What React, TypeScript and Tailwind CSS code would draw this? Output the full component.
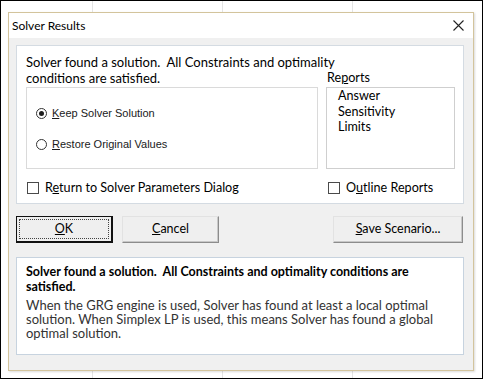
import React from "react";

const ui = "font-['Segoe_UI','Lato',sans-serif]";

function Radio({ checked, children }: { checked?: boolean; children: React.ReactNode }) {
  return (
    <div className="flex items-center h-[16px]">
      <div className="w-[11px] h-[11px] rounded-full border border-[#333] bg-white flex items-center justify-center">
        {checked && <div className="w-[5px] h-[5px] rounded-full bg-[#1e1e1e]" />}
      </div>
      <span className="ml-[5px] text-[11px] font-['Liberation_Sans',sans-serif] text-[#1a1a1a]">{children}</span>
    </div>
  );
}

function Check({ children }: { children: React.ReactNode }) {
  return (
    <div className="flex items-center h-[16px]">
      <div className="w-[12px] h-[12px] border border-[#4a4a4a] bg-white" />
      <span className="ml-[6px] text-[12.6px]">{children}</span>
    </div>
  );
}

function Btn({ children, width }: { children: React.ReactNode; width: string }) {
  return (
    <button
      className={`${width} h-[27px] bg-[#efefef] border border-t-[#e2e2e2] border-l-[#e2e2e2] border-r-[#8c8c8c] border-b-[#8c8c8c] shadow-[inset_-1px_-1px_0_#c8c8c8] flex items-center justify-center text-[12.5px] text-black`}
    >
      {children}
    </button>
  );
}

export default function App() {
  return (
    <div
      className={`w-[483px] h-[379px] border border-black bg-white bg-[repeating-linear-gradient(to_right,transparent_0px,transparent_91px,#e4e4e4_91px,#e4e4e4_92px,transparent_92px,transparent_130px)] overflow-hidden ${ui}`}
    >
      <div className="ml-[7px] mt-[11px] w-[466px] h-[359px] border border-[#d3c49c] bg-[#f0f0f0] flex flex-col shadow-[1px_1px_2px_rgba(0,0,0,0.15)]">
        {/* title bar */}
        <div className="h-[25px] bg-white flex items-center justify-between pl-[3px] pr-[9px]">
          <span className="text-[12px] text-black">Solver Results</span>
          <svg width="11" height="11" viewBox="0 0 11 11" className="block">
            <path d="M0.5 0.5 L10.5 10.5 M10.5 0.5 L0.5 10.5" stroke="#222" strokeWidth="1.1" fill="none" />
          </svg>
        </div>

        <div className="px-[7px] pt-[7px] flex flex-col">
          {/* top panel */}
          <div className="w-[448px] h-[159px] bg-white border border-[#d4dbe2] pl-[9px] pt-[8px] text-[13px] leading-[16px] text-black">
            <div className="whitespace-pre">Solver found a solution.  All Constraints and optimality</div>
            <div className="flex">
              <span className="w-[301px]">conditions are satisfied.</span>
              <span className="text-[12.6px]">
                Re<u>p</u>orts
              </span>
            </div>
            <div className="flex mt-px">
              <div className="w-[292px] h-[82px] border border-[#dadada] pl-[9px] pt-[17px]">
                <Radio checked>
                  <u>K</u>eep Solver Solution
                </Radio>
                <div className="mt-[15px]">
                  <Radio>
                    <u>R</u>estore Original Values
                  </Radio>
                </div>
              </div>
              <div className="ml-[8px] w-[129px] h-[82px] border border-[#cfcfcf] pl-[11px] leading-[15.5px] text-[12.6px]">
                <div>Answer</div>
                <div>Sensitivity</div>
                <div>Limits</div>
              </div>
            </div>
            <div className="flex mt-[11px] pl-px">
              <div className="w-[301px]">
                <Check>
                  R<u>e</u>turn to Solver Parameters Dialog
                </Check>
              </div>
              <Check>
                O<u>u</u>tline Reports
              </Check>
            </div>
          </div>

          {/* buttons */}
          <div className="w-[448px] flex mt-[12px]">
            <button className="w-[97px] h-[27px] bg-[#efefef] border border-[#111] border-r-2 border-b-2 p-[2px] text-[12.5px] text-black">
              <div className="h-full border border-dotted border-[#444] flex items-center justify-center">
                <u>O</u>K
              </div>
            </button>
            <div className="ml-[9px]">
              <Btn width="w-[97px]">
                <u>C</u>ancel
              </Btn>
            </div>
            <div className="ml-auto mr-px">
              <Btn width="w-[130px]">
                <span>
                  <u>S</u>ave Scenario...
                </span>
              </Btn>
            </div>
          </div>

          {/* message panel */}
          <div className="w-[448px] h-[98px] mt-[14px] bg-white border border-[#c7d3df] pl-[9px] pt-[6px] text-[13px]">
            <div className="font-bold text-[12.5px] leading-[15px] text-black whitespace-pre">
              Solver found a solution.  All Constraints and optimality conditions are{"\n"}satisfied.
            </div>
            <div className="mt-[4px] leading-[14px] text-[#333]">
              When the GRG engine is used, Solver has found at least a local optimal
              <br />
              solution. When Simplex LP is used, this means Solver has found a global
              <br />
              optimal solution.
            </div>
          </div>
        </div>
      </div>
    </div>
  );
}
